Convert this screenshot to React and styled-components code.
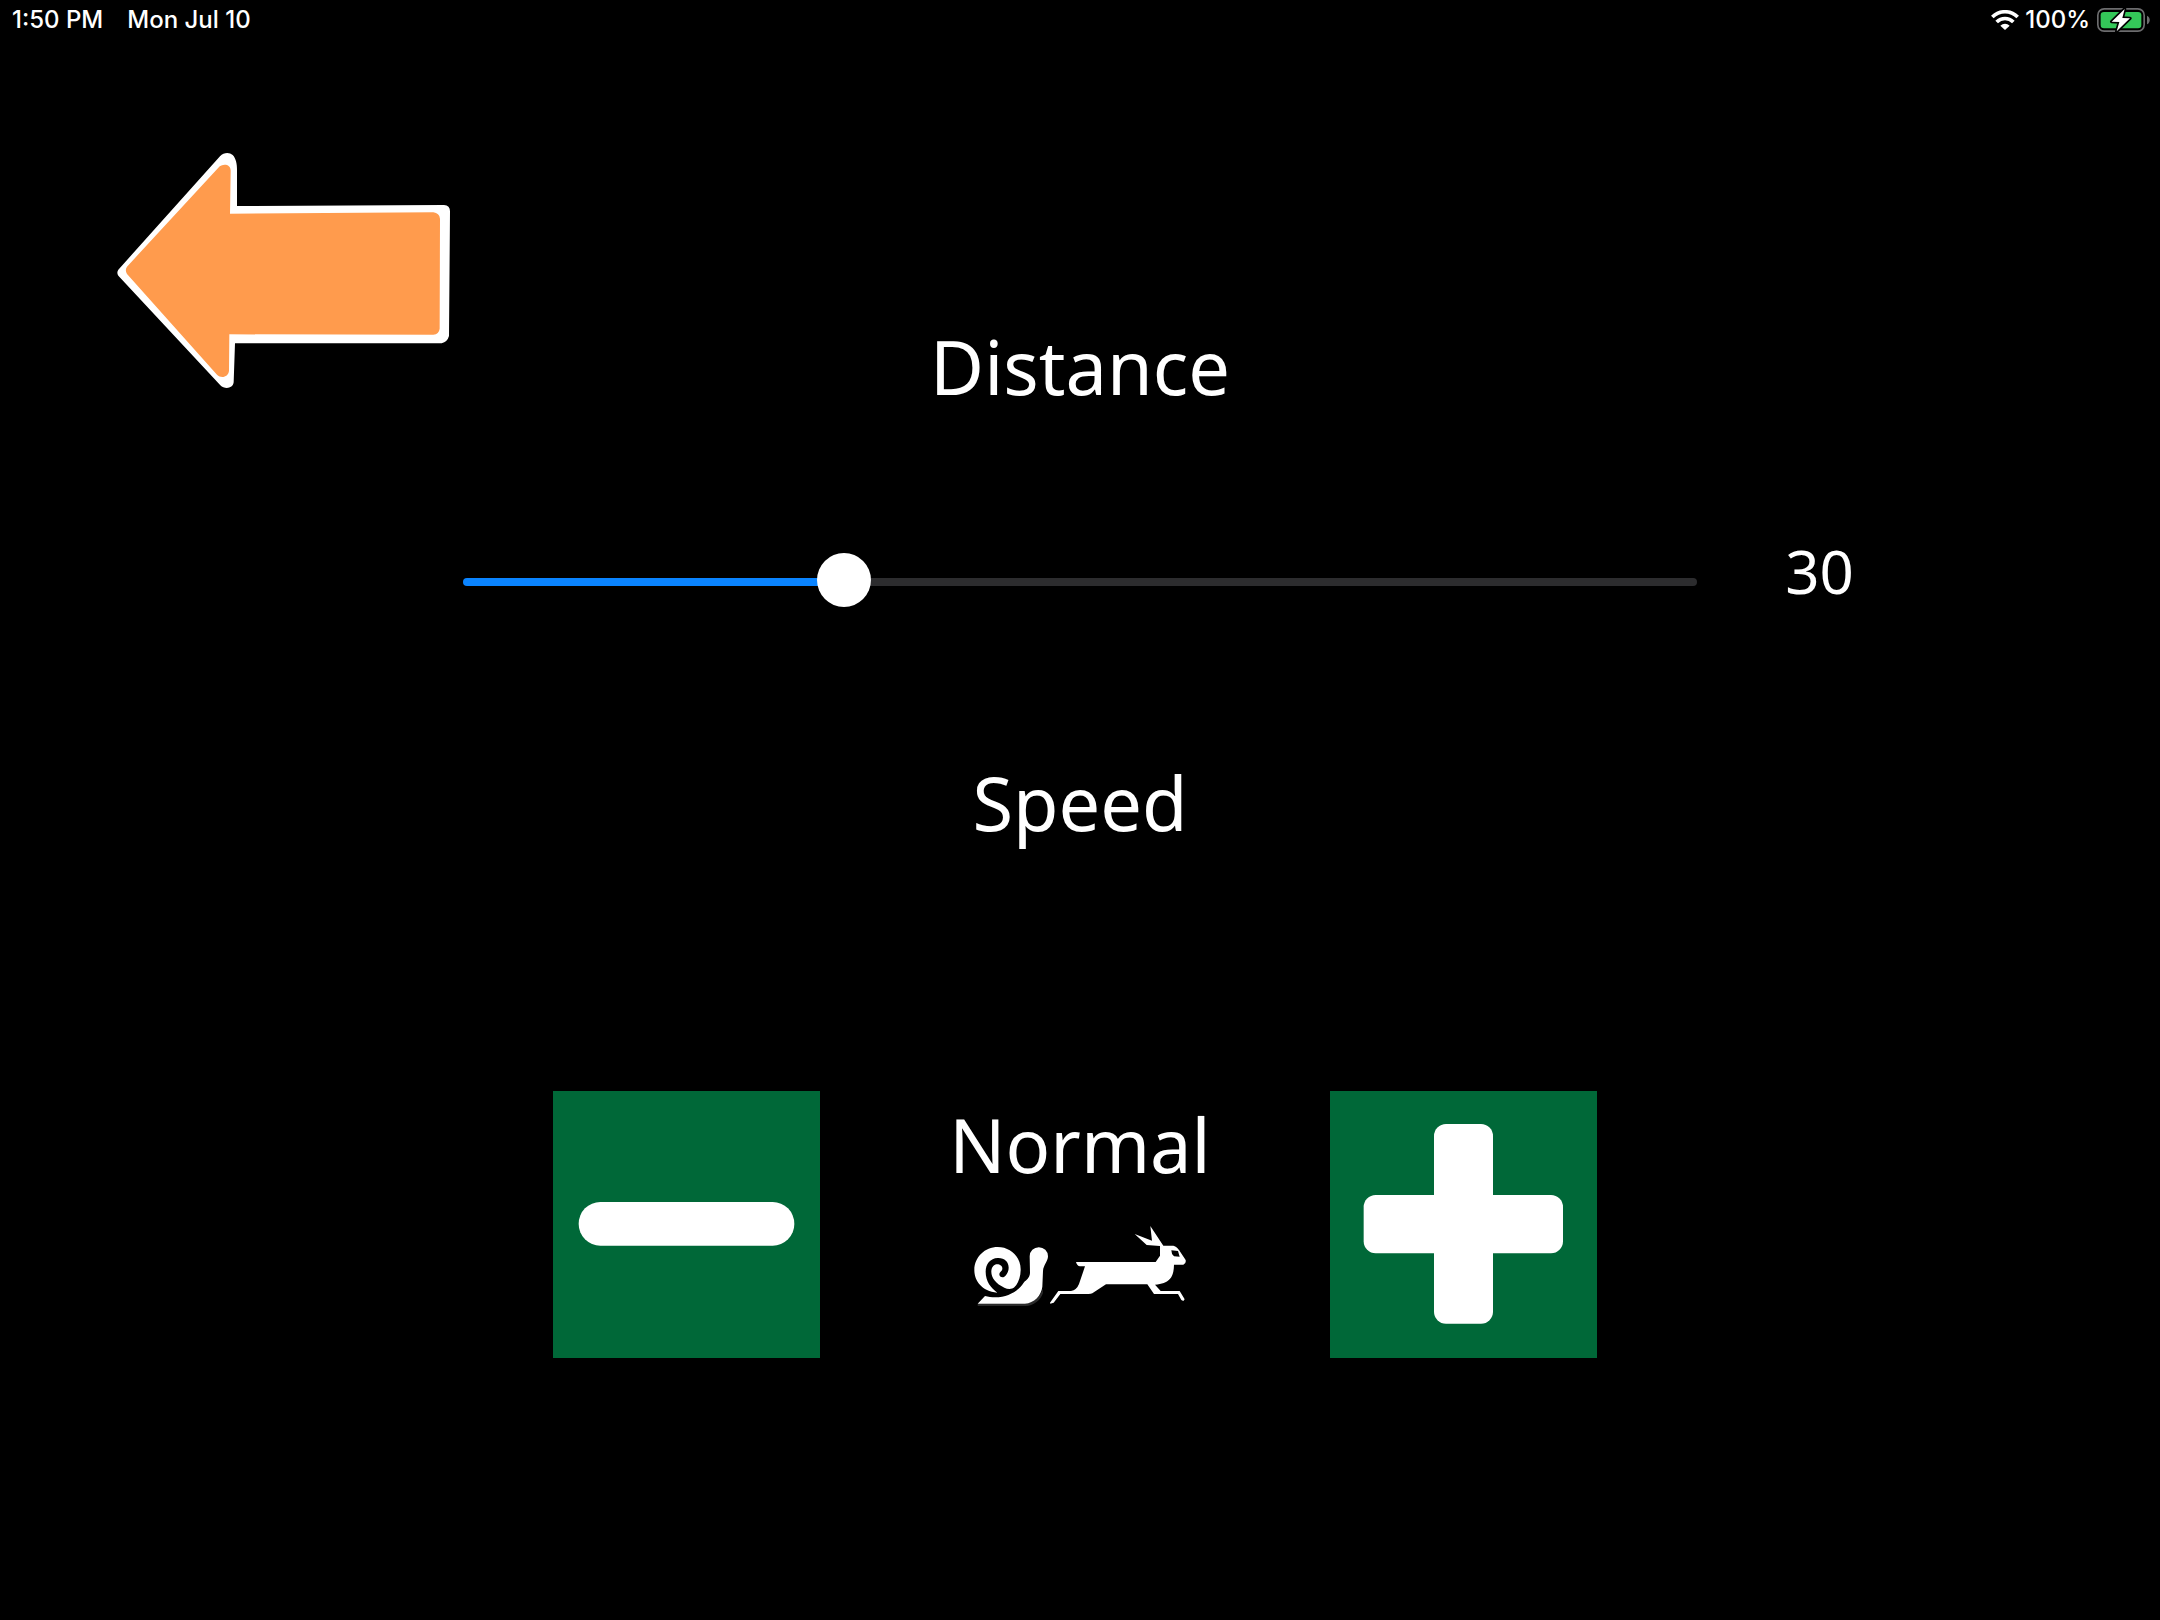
import React, { useState } from 'react';
import styled, { createGlobalStyle } from 'styled-components';

const GlobalStyle = createGlobalStyle`
  *, *::before, *::after { box-sizing: border-box; }
  body {
    margin: 0;
    background: #000;
    color: #fff;
    font-family: 'Noto Sans', 'Open Sans', sans-serif;
  }
`;

const Screen = styled.div`
  display: flex;
  flex-direction: column;
  min-height: 100vh;
  background: #000;
`;

const StatusBar = styled.header`
  display: flex;
  justify-content: space-between;
  align-items: center;
  height: 40px;
  padding: 0 10px 0 12px;
  font: 500 24px/40px Inter, Roboto, sans-serif;
`;

const StatusGroup = styled.div`
  display: flex;
  align-items: center;
  gap: ${({ $gap }) => $gap}px;
`;

const Icon = styled.svg`
  display: block;
  flex: none;
`;

const Top = styled.div`
  display: grid;
  grid-template-columns: 1fr auto 1fr;
  grid-auto-rows: minmax(258px, auto);
  padding: 113px 117px 0;
`;

const IconButton = styled.button`
  place-self: start;
  display: block;
  margin: 0;
  padding: 0;
  border: 0;
  background: ${({ $fill }) => $fill || 'none'};
  cursor: pointer;
`;

const Heading = styled.h1`
  align-self: ${({ $align }) => $align};
  margin: 0;
  font-size: 74px;
  line-height: 88px;
  font-weight: 400;
`;

const DistanceRow = styled.div`
  display: grid;
  grid-template-columns: 3fr 8fr 3fr;
  align-items: end;
  margin-top: 124px;
`;

const Slider = styled.input`
  grid-column: 2;
  appearance: none;
  display: block;
  width: 100%;
  height: 54px;
  margin: 0;
  background: none;
  cursor: pointer;

  &::-webkit-slider-runnable-track {
    height: 8px;
    margin-top: 4px;
    border-radius: 4px;
    background: linear-gradient(to right, #0a84ff var(--filled), #2c2c2e var(--filled));
  }

  &::-webkit-slider-thumb {
    appearance: none;
    width: 54px;
    height: 54px;
    margin-top: -25px;
    border-radius: 50%;
    background: #fff;
  }
`;

const Value = styled.output`
  padding-left: 88px;
  font-size: 60px;
  line-height: 72px;
`;

const SpeedSection = styled.section`
  display: flex;
  flex-direction: column;
  margin-top: 152px;
`;

const SpeedRow = styled.div`
  display: grid;
  grid-template-columns: 267px 510px 267px;
  justify-content: center;
  margin-top: 244px;
  padding-right: 10px;
`;

const SpeedLevel = styled.div`
  display: flex;
  flex-direction: column;
  align-items: center;
  gap: 31px;
  padding: 10px 0 0 10px;
  font-size: 74px;
  line-height: 88px;
`;

const WifiIcon = () => (
  <Icon width="28" height="20" viewBox="0 0 84 60" aria-hidden="true">
    <g fill="none" stroke="#fff" strokeWidth="11">
      <path d="M4 21 C25 0 59 0 80 21" />
      <path d="M17 36 C31 22 53 22 67 36" />
    </g>
    <path d="M28 47 C36 39 48 39 56 47 L42 60 Z" fill="#fff" />
  </Icon>
);

const BatteryIcon = () => (
  <Icon width="54" height="26" viewBox="378 21 162 78" aria-label="Charging">
    <rect x="383.500" y="26.500" width="139" height="67" rx="19" fill="none" stroke="#6c6c6e" strokeWidth="5" />
    <path d="M531 47 C542 51 542 69 531 73 Z" fill="#6c6c6e" />
    <rect x="392" y="36" width="122" height="49" rx="10" fill="#34c759" />
    <path
      d="M464 27 L425 65 L448 66 L440 94 L480 55 L457 54 Z"
      fill="#fff"
      stroke="#000"
      strokeWidth="10"
      strokeLinejoin="round"
      paintOrder="stroke"
    />
  </Icon>
);

const BackArrow = () => (
  <Icon width="333" height="235" viewBox="51 39 999 705" aria-hidden="true">
    <path
      fill="#fff"
      d="M360 49 C371 37 388 36 398 45 C408 55 411 72 411 90 L411 198 L1032 195 Q1050 196 1050 214 L1047 588 Q1042 606 1025 610 L405 610 L401 727 C399 746 374 749 361 736 L55 407 Q49 398 55 389 Z"
    />
    <path
      fill="#ff9b4d"
      d="M355 83 C368 69 392 72 392 92 L390 221 L1000 217 Q1018 219 1020 236 L1019 566 Q1017 582 1000 584 L388 583 L387 692 C385 712 363 716 351 704 L81 402 Q74 391 81 380 Z"
    />
  </Icon>
);

const MinusIcon = () => (
  <Icon width="267" height="267" viewBox="0 0 801 801" aria-hidden="true">
    <rect x="77" y="333" width="647" height="131" rx="65" fill="#fff" />
  </Icon>
);

const PlusIcon = () => (
  <Icon width="267" height="267" viewBox="0 0 801 801" aria-hidden="true">
    <g fill="#fff">
      <rect x="312" y="99" width="177" height="599" rx="36" />
      <rect x="101" y="312" width="598" height="175" rx="36" />
    </g>
  </Icon>
);

const SnailAndRabbit = () => (
  <Icon width="220" height="90" viewBox="0 0 660 270" role="img" aria-label="Slow to fast">
    <g transform="translate(-15 45)">
      <path fill="#2b2b2b" d="M38 206 L180 206 C208 202 228 184 233 160 L234 174 C226 198 205 212 182 213 L38 213 Z" />
      <path
        fill="#fff"
        d="M60 183 C82 189 110 188 130 180 C158 168 168 155 176 143 C184 134 194 130 195 114 L194 64 A27.500 27.500 0 0 1 249 64 C249 78 235 91 234 108 L232 155 C229 182 207 204 180 206 L38 206 Z"
      />
      <path
        fill="#fff"
        d="M97 173 C50 168 28 138 28 105 C28 66 60 36 98 36 C137 36 167 66 167 103 C167 125 160 145 148 157 C141 163 128 163 118 158 C92 145 78 128 79 108 C80 95 88 88 96 88 C106 88 113 94 112 102 C111 110 103 110 103 118 C103 126 112 129 118 125 C126 120 131 108 131 98 C131 80 118 68 98 69 C76 70 62 87 62 110 C62 140 78 158 97 173 Z"
      />
    </g>
    <g transform="translate(225 0)">
      <path
        fill="#fff"
        fillRule="evenodd"
        d="M93 126 L332 126 L345 107 L345 78 L305 75 L269 42 L321 62 L316 18 L355 77 L385 77 Q393 78 402 90 L422 120 Q424 132 415 134 L387 134 C386 160 384 190 330 194 L347 213 L404 213 L419 238 L415 243 L409 240 L399 222 L327 222 L307 193 L183 193 L142 220 Q138 222 130 222 L46 222 L26 248 L16 251 L15 248 L40 213 L78 213 Q95 210 102 192 L120 139 L105 139 Q96 138 93 126 Z M379 91 L399 93 L404 110 L387 109 Q379 103 379 91 Z"
      />
    </g>
  </Icon>
);

const LEVELS = ['Slow', 'Normal', 'Fast'];

export default function App() {
  const [distance, setDistance] = useState(30);
  const [level, setLevel] = useState(1);

  return (
    <Screen>
      <GlobalStyle />
      <StatusBar>
        <StatusGroup $gap={24}>
          <span>1:50 PM</span>
          <span>Mon Jul 10</span>
        </StatusGroup>
        <StatusGroup $gap={6}>
          <WifiIcon />
          <span>100%</span>
          <BatteryIcon />
        </StatusGroup>
      </StatusBar>
      <main>
        <Top>
          <IconButton type="button" aria-label="Back">
            <BackArrow />
          </IconButton>
          <Heading as="label" htmlFor="distance" $align="end">Distance</Heading>
        </Top>
        <DistanceRow>
          <Slider
            id="distance"
            type="range"
            min="0"
            max="100"
            value={distance}
            onChange={(e) => setDistance(Number(e.target.value))}
            style={{ '--filled': `${distance}%` }}
          />
          <Value htmlFor="distance">{distance}</Value>
        </DistanceRow>
        <SpeedSection>
          <Heading as="h2" $align="center">Speed</Heading>
          <SpeedRow>
            <IconButton type="button" aria-label="Slower" $fill="#006838" onClick={() => setLevel(Math.max(0, level - 1))}>
              <MinusIcon />
            </IconButton>
            <SpeedLevel>
              <span>{LEVELS[level]}</span>
              <SnailAndRabbit />
            </SpeedLevel>
            <IconButton type="button" aria-label="Faster" $fill="#006838" onClick={() => setLevel(Math.min(2, level + 1))}>
              <PlusIcon />
            </IconButton>
          </SpeedRow>
        </SpeedSection>
      </main>
    </Screen>
  );
}
